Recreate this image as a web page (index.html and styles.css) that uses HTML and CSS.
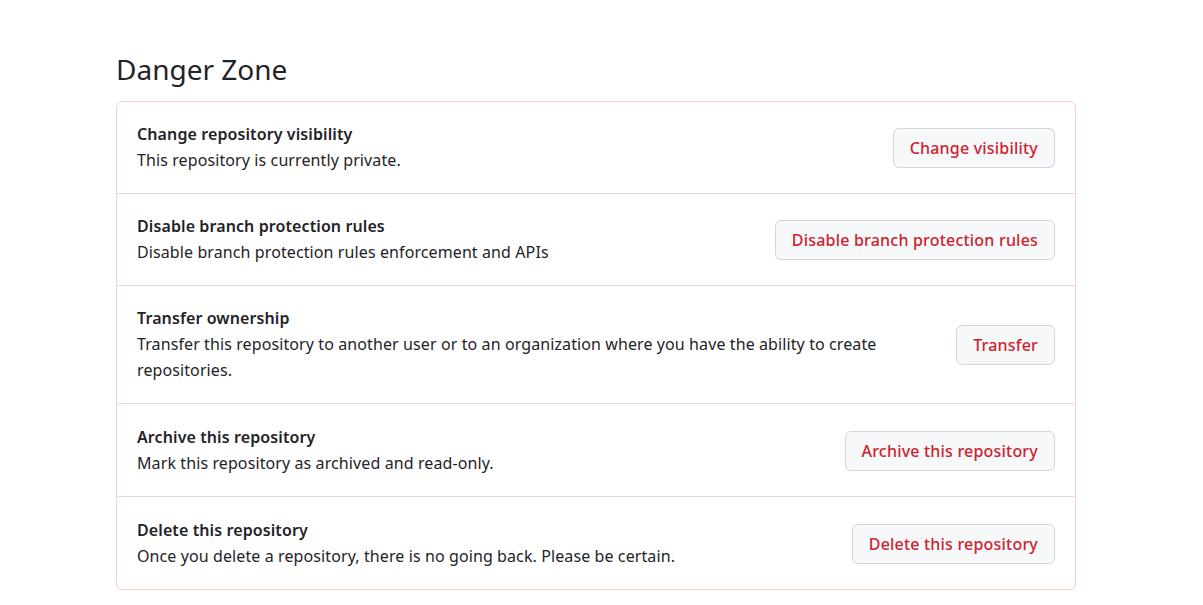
FILE: index.html
```html
<!DOCTYPE html>
<html>
<head>
<meta charset="utf-8">
<link rel="stylesheet" href="styles.css">
</head>
<body>
<main class="page">
  <h2 class="title">Danger Zone</h2>
  <div class="box">
    <div class="row">
      <div class="info">
        <div class="name">Change repository visibility</div>
        <div class="desc">This repository is currently private.</div>
      </div>
      <button class="btn">Change visibility</button>
    </div>
    <div class="row">
      <div class="info">
        <div class="name">Disable branch protection rules</div>
        <div class="desc">Disable branch protection rules enforcement and APIs</div>
      </div>
      <button class="btn">Disable branch protection rules</button>
    </div>
    <div class="row">
      <div class="info narrow">
        <div class="name">Transfer ownership</div>
        <div class="desc">Transfer this repository to another user or to an organization where you have the ability to create repositories.</div>
      </div>
      <button class="btn">Transfer</button>
    </div>
    <div class="row tall">
      <div class="info">
        <div class="name">Archive this repository</div>
        <div class="desc">Mark this repository as archived and read-only.</div>
      </div>
      <button class="btn">Archive this repository</button>
    </div>
    <div class="row tall">
      <div class="info">
        <div class="name">Delete this repository</div>
        <div class="desc">Once you delete a repository, there is no going back. Please be certain.</div>
      </div>
      <button class="btn">Delete this repository</button>
    </div>
  </div>
</main>
</body>
</html>
```

FILE: styles.css
```css
html, body {
  margin: 0;
  padding: 0;
  background: #ffffff;
}
body {
  font-family: "Noto Sans", "Liberation Sans", sans-serif;
  color: #1f2328;
}
.page {
  width: 960px;
  margin-left: 116px;
  padding-top: 48px;
}
.title {
  margin: 0 0 10px 0;
  font-size: 28px;
  font-weight: 400;
  line-height: 43px;
}
.box {
  border: 1px solid #ffcecb;
  border-radius: 6px;
}
.row {
  display: flex;
  align-items: center;
  justify-content: space-between;
  padding: 20px 20px;
  border-top: 1px solid #d8dee4;
}
.row.tall {
  padding-top: 21px;
}
.row:first-child {
  border-top: none;
}
.info {
  font-size: 16px;
  letter-spacing: 0.1px;
}
.info.narrow {
  max-width: 760px;
}
.name {
  font-weight: 600;
  line-height: 25px;
}
.desc {
  line-height: 26px;
}
.btn {
  flex-shrink: 0;
  font-family: inherit;
  font-size: 16px;
  font-weight: 500;
  letter-spacing: 0.2px;
  color: #cf222e;
  background: #f6f8fa;
  border: 1px solid #d0d7de;
  border-radius: 6px;
  height: 40px;
  padding: 0 16px;
  cursor: pointer;
}
```
